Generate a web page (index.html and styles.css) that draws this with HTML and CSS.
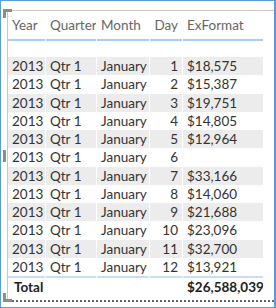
FILE: index.html
```html
<!DOCTYPE html>
<html>
<head>
<meta charset="utf-8">
<link rel="stylesheet" href="styles.css">
</head>
<body>
<div class="frame">
  <div class="visual">
    <div class="grid head">
      <div class="c">Year</div>
      <div class="c">Quarter</div>
      <div class="c">Month</div>
      <div class="c r">Day</div>
      <div class="c">ExFormat</div>
    </div>
    <div class="spacer"></div>
    <div class="body">
      <div class="grid row"><div class="c r">2013</div><div class="c">Qtr 1</div><div class="c">January</div><div class="c r">1</div><div class="c">$18,575</div></div>
      <div class="grid row"><div class="c r">2013</div><div class="c">Qtr 1</div><div class="c">January</div><div class="c r">2</div><div class="c">$15,387</div></div>
      <div class="grid row"><div class="c r">2013</div><div class="c">Qtr 1</div><div class="c">January</div><div class="c r">3</div><div class="c">$19,751</div></div>
      <div class="grid row"><div class="c r">2013</div><div class="c">Qtr 1</div><div class="c">January</div><div class="c r">4</div><div class="c">$14,805</div></div>
      <div class="grid row"><div class="c r">2013</div><div class="c">Qtr 1</div><div class="c">January</div><div class="c r">5</div><div class="c">$12,964</div></div>
      <div class="grid row"><div class="c r">2013</div><div class="c">Qtr 1</div><div class="c">January</div><div class="c r">6</div><div class="c"></div></div>
      <div class="grid row"><div class="c r">2013</div><div class="c">Qtr 1</div><div class="c">January</div><div class="c r">7</div><div class="c">$33,166</div></div>
      <div class="grid row"><div class="c r">2013</div><div class="c">Qtr 1</div><div class="c">January</div><div class="c r">8</div><div class="c">$14,060</div></div>
      <div class="grid row"><div class="c r">2013</div><div class="c">Qtr 1</div><div class="c">January</div><div class="c r">9</div><div class="c">$21,688</div></div>
      <div class="grid row"><div class="c r">2013</div><div class="c">Qtr 1</div><div class="c">January</div><div class="c r">10</div><div class="c">$23,096</div></div>
      <div class="grid row"><div class="c r">2013</div><div class="c">Qtr 1</div><div class="c">January</div><div class="c r">11</div><div class="c">$32,700</div></div>
      <div class="grid row"><div class="c r">2013</div><div class="c">Qtr 1</div><div class="c">January</div><div class="c r">12</div><div class="c">$13,921</div></div>
    </div>
    <div class="grid total">
      <div class="c tl">Total</div>
      <div class="c"></div>
      <div class="c"></div>
      <div class="c"></div>
      <div class="c">$26,588,039</div>
    </div>
    <span class="handle h-tl"></span>
    <span class="handle h-ml"></span>
    <span class="handle h-bl"></span>
  </div>
</div>
</body>
</html>
```
FILE: styles.css
```css
* { box-sizing: border-box; }
html, body { margin: 0; padding: 0; background: #fff; }
body {
  font-family: Lato, "Noto Sans", sans-serif;
  font-size: 13.5px;
  color: #333;
}
.frame {
  width: 276px;
  height: 308px;
  border: 1px solid #5a9bdc;
  border-right-width: 2px;
  padding: 9px 0 4px 6px;
}
.visual {
  position: relative;
  height: 292px;
  border-top: 1px solid #c8c8c8;
  border-left: 1px solid #c8c8c8;
  border-bottom: 2px dotted #666;
}
.grid {
  display: grid;
  grid-template-columns: 37px 50px 52px 32px 80px;
  column-gap: 1px;
}
.c {
  padding: 0 4px;
  white-space: nowrap;
  overflow: hidden;
}
.r { text-align: right; }
.head { height: 30px; }
.head .c {
  color: #666;
  padding-top: 6px;
  border-bottom: 2px solid #a9cbee;
}
.spacer { height: 16px; }
.row { height: 18.25px; line-height: 18px; }
.row:nth-child(odd) .c { background: #ececec; }
.total .c {
  height: 22px;
  border-top: 2px solid #c7def5;
  font-weight: bold;
  color: #222;
  line-height: 19px;
}
.total .tl { padding-left: 6px; }
.handle { position: absolute; background: #8c8c8c; }
.h-tl { left: -5px; top: -2px; width: 9px; height: 3px; }
.h-tl::after { content: ""; position: absolute; left: 0; top: 0; width: 3px; height: 9px; background: #8c8c8c; }
.h-ml { left: -5px; top: 139px; width: 3px; height: 12px; }
.h-bl { left: -5px; bottom: -2px; width: 9px; height: 3px; }
.h-bl::after { content: ""; position: absolute; left: 0; bottom: 0; width: 3px; height: 9px; background: #8c8c8c; }
```
